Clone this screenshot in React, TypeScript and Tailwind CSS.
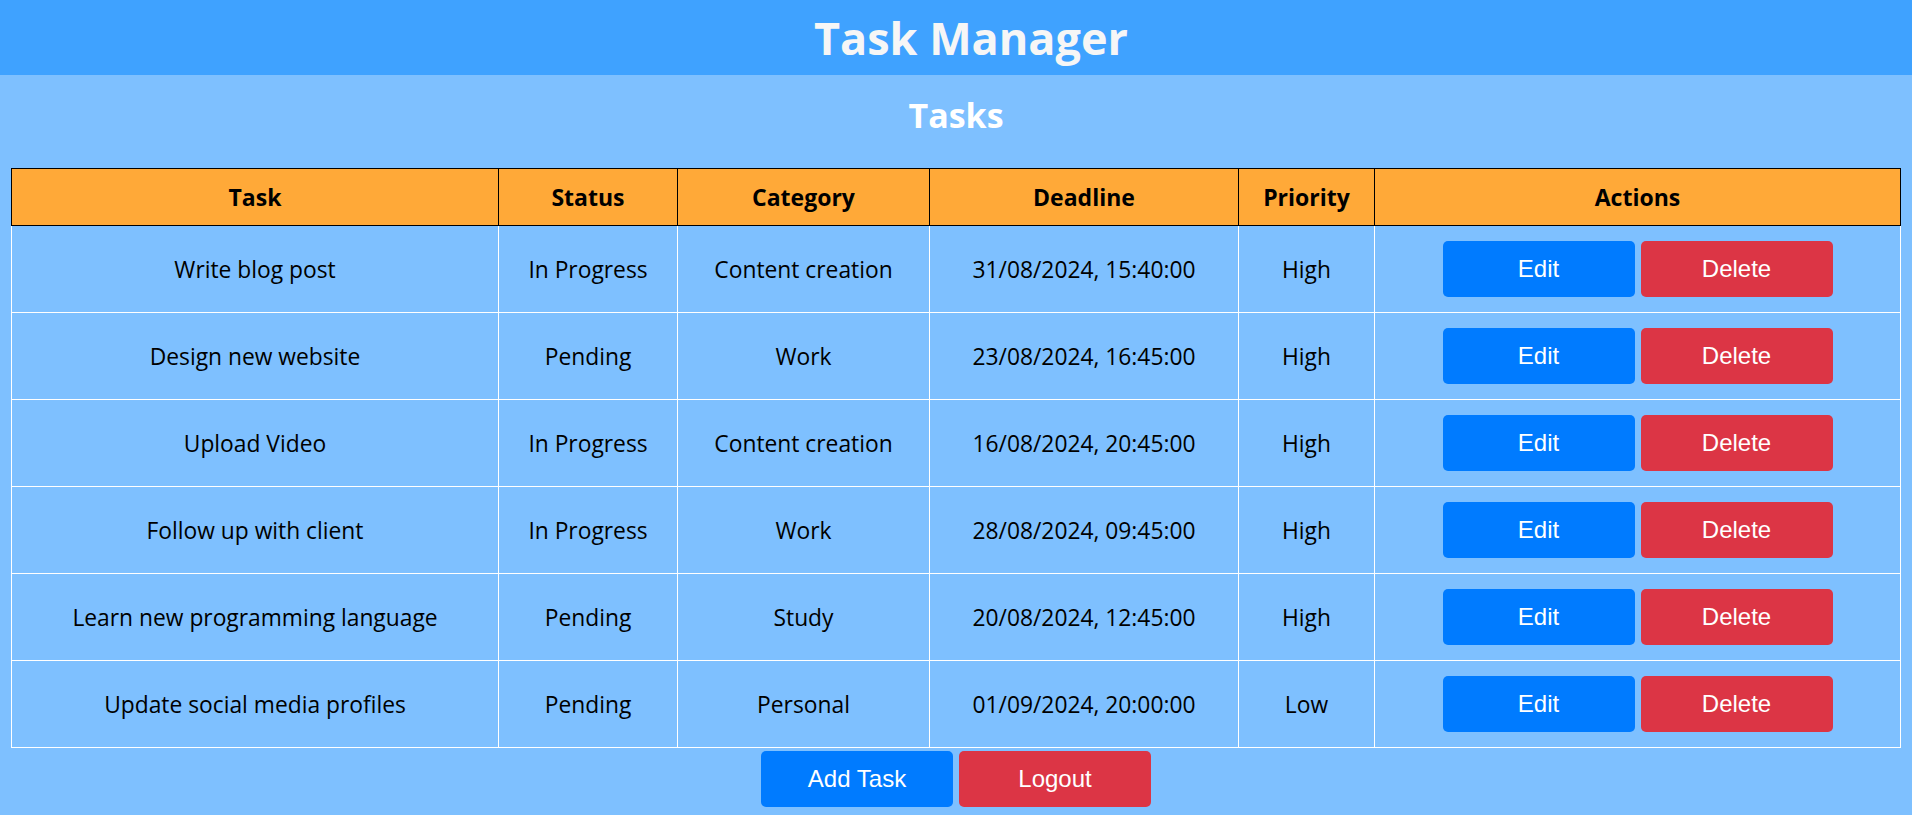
import React from "react";

const tasks = [
  ["Write blog post", "In Progress", "Content creation", "31/08/2024, 15:40:00", "High"],
  ["Design new website", "Pending", "Work", "23/08/2024, 16:45:00", "High"],
  ["Upload Video", "In Progress", "Content creation", "16/08/2024, 20:45:00", "High"],
  ["Follow up with client", "In Progress", "Work", "28/08/2024, 09:45:00", "High"],
  ["Learn new programming language", "Pending", "Study", "20/08/2024, 12:45:00", "High"],
  ["Update social media profiles", "Pending", "Personal", "01/09/2024, 20:00:00", "Low"],
];

const headers = ["Task", "Status", "Category", "Deadline", "Priority", "Actions"];
const widths = [487, 179, 252, 309, 136, 526];

export default function App() {
  return (
    <div className="min-h-[815px] bg-[#7ec0ff] font-['Open_Sans',sans-serif] text-black">
      <div className="h-[75px] bg-[#3fa2ff] flex items-center justify-center pl-[30px]">
        <h1 className="text-[45px] leading-[48px] font-bold text-[#f6f6f6]">Task Manager</h1>
      </div>
      <div className="pt-[22px] pb-[35px] flex justify-center">
        <h2 className="text-[34px] leading-[36px] font-bold text-white">Tasks</h2>
      </div>
      <div className="px-[11px]">
        <table className="w-[1889px] table-fixed border-collapse">
          <colgroup>
            {widths.map((w, i) => (
              <col key={i} style={{ width: w }} />
            ))}
          </colgroup>
          <thead>
            <tr className="bg-[#ffa938]">
              {headers.map((h) => (
                <th key={h} className="h-[57px] border border-black text-[23px] font-bold text-center p-0">
                  {h}
                </th>
              ))}
            </tr>
          </thead>
          <tbody>
            {tasks.map((t, i) => (
              <tr key={i}>
                {t.map((c, j) => (
                  <td key={j} className="h-[87px] border border-white text-[22.8px] text-center p-0 pt-[2px]">
                    {c}
                  </td>
                ))}
                <td className="h-[87px] border border-white p-0">
                  <div className="flex justify-center gap-[6px]">
                    <button className="w-[192px] h-[56px] rounded-[5px] bg-[#007bff] text-white text-[24px] font-['Liberation_Sans',Arial,sans-serif]">
                      Edit
                    </button>
                    <button className="w-[192px] h-[56px] rounded-[5px] bg-[#dc3545] text-white text-[24px] font-['Liberation_Sans',Arial,sans-serif]">
                      Delete
                    </button>
                  </div>
                </td>
              </tr>
            ))}
          </tbody>
        </table>
      </div>
      <div className="pt-[3px] flex justify-center gap-[6px]">
        <button className="w-[192px] h-[56px] rounded-[5px] bg-[#007bff] text-white text-[24px] font-['Liberation_Sans',Arial,sans-serif]">
          Add Task
        </button>
        <button className="w-[192px] h-[56px] rounded-[5px] bg-[#dc3545] text-white text-[24px] font-['Liberation_Sans',Arial,sans-serif]">
          Logout
        </button>
      </div>
    </div>
  );
}
